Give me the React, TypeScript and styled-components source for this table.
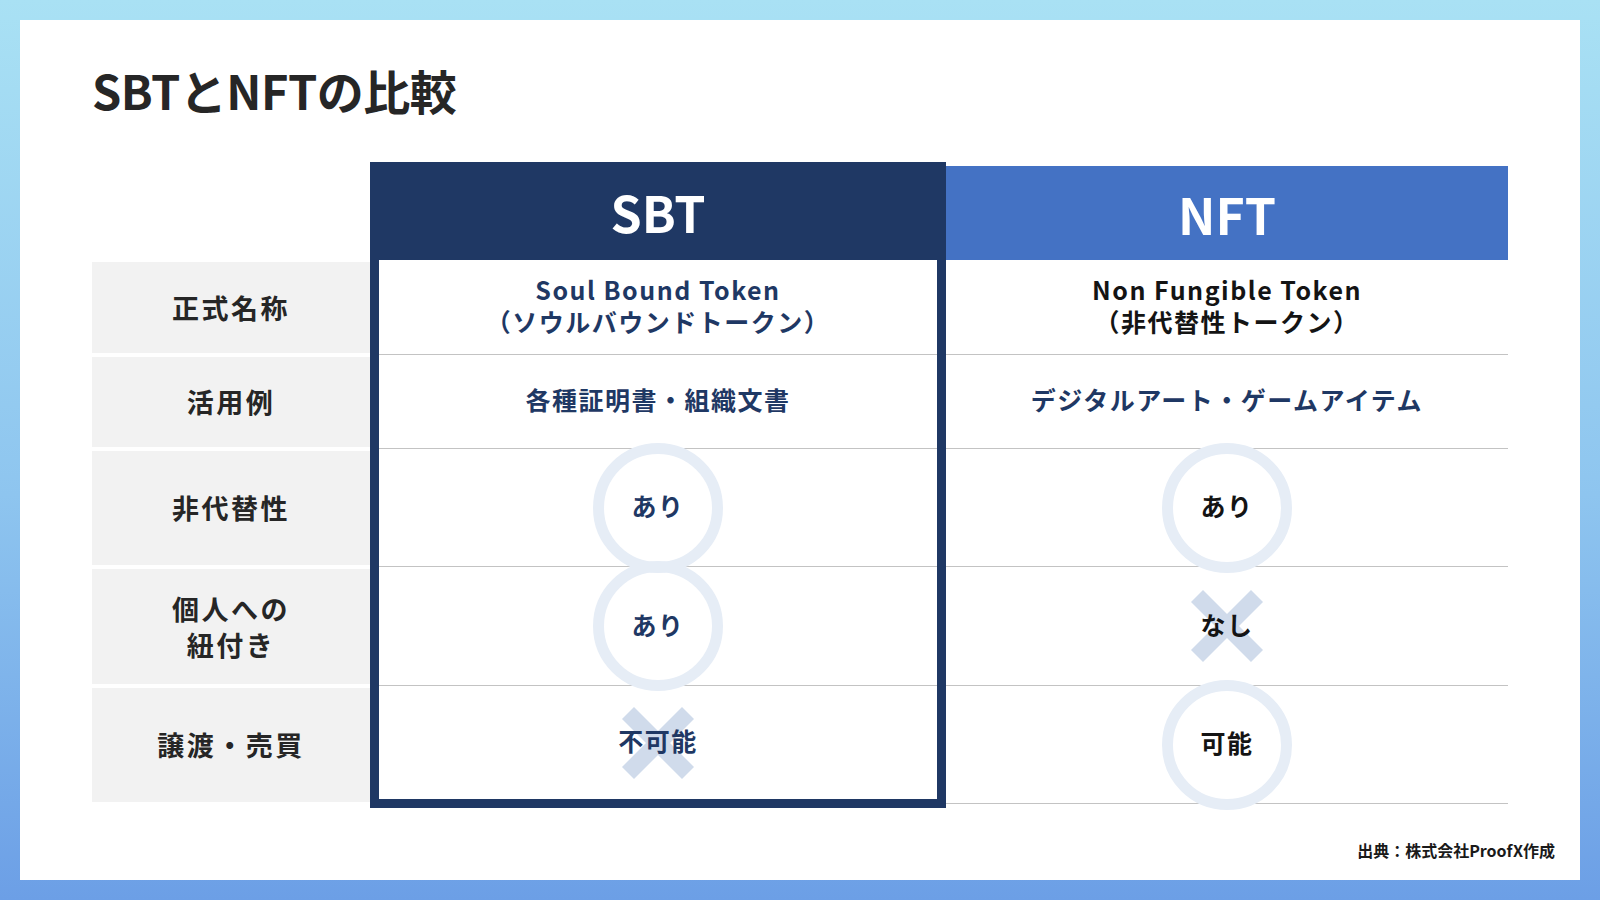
import React from 'react'
import styled, { createGlobalStyle } from 'styled-components'

const GlobalStyle = createGlobalStyle`
    body {
        margin: 0;
        font-family: "Noto Sans CJK JP", "Noto Sans", sans-serif;
    }
`;

const NAVY = '#1f3864';
const INK = '#262626';

const Page = styled.div`
    width: 1600px;
    height: 900px;
    box-sizing: border-box;
    padding: 20px;
    background: linear-gradient(180deg, #a9e1f4 0%, #8ec5ef 55%, #6c9fe6 100%);
`;

const Card = styled.div`
    height: 100%;
    box-sizing: border-box;
    background-color: #fff;
    padding: 46px 25px 20px 72px;
    display: flex;
    flex-direction: column;
`;

const Title = styled.h1`
    margin: 0;
    font-size: 47px;
    line-height: 48px;
    font-weight: 700;
    letter-spacing: -0.5px;
    color: ${INK};
`;

const Table = styled.div`
    margin-top: 48px;
    display: flex;
    align-items: flex-start;
`;

const LabelColumn = styled.div`
    width: 278px;
    padding-top: 98px;
    display: flex;
    flex-direction: column;
`;

const LabelCell = styled.div<{ $h: number }>`
    height: ${p => p.$h}px;
    box-sizing: border-box;
    padding: 2px 0;
    display: flex;
`;

const LabelBox = styled.div`
    flex: 1;
    background-color: #f2f2f2;
    display: flex;
    align-items: center;
    justify-content: center;
    text-align: center;
    font-size: 27px;
    line-height: 36px;
    letter-spacing: 2.5px;
    font-weight: 700;
    color: ${INK};
`;

const SbtColumn = styled.div`
    width: 576px;
    box-sizing: border-box;
    background-color: ${NAVY};
    padding: 0 9px 9px;
`;

const NftColumn = styled.div`
    width: 562px;
    margin-top: 4px;
`;

const ColumnHeader = styled.div<{ $h: number; $bg: string }>`
    height: ${p => p.$h}px;
    background-color: ${p => p.$bg};
    display: flex;
    align-items: center;
    justify-content: center;
    color: #fff;
    font-size: 50px;
    font-weight: 700;
`;

const Body = styled.div`
    background-color: #fff;
`;

const DataCell = styled.div<{ $h: number; $last?: boolean }>`
    position: relative;
    height: ${p => p.$h}px;
    box-sizing: border-box;
    padding-bottom: 5px;
    border-bottom: ${p => (p.$last ? 'none' : '1px solid #c3c3c3')};
    display: flex;
    align-items: center;
    justify-content: center;
`;

const CellText = styled.div<{ $tone: string }>`
    position: relative;
    z-index: 1;
    text-align: center;
    font-size: 25px;
    line-height: 32px;
    letter-spacing: 1.5px;
    font-weight: 700;
    color: ${p => p.$tone};
`;

const Mark = styled.svg`
    position: absolute;
    left: 50%;
    top: 50%;
    transform: translate(-50%, -50%);
    pointer-events: none;
`;

const Footer = styled.div`
    margin-top: auto;
    align-self: flex-end;
    font-size: 16px;
    line-height: 20px;
    font-weight: 700;
    color: #1a1a1a;
`;

type MarkKind = 'circle' | 'cross' | undefined;

interface Cell {
    lines: string[];
    dark?: boolean;
    mark?: MarkKind;
}

interface Row {
    label: string[];
    h: number;
    sbt: Cell;
    nft: Cell;
}

const rows: Row[] = [
    {
        label: ['正式名称'],
        h: 95,
        sbt: { lines: ['Soul Bound Token', '（ソウルバウンドトークン）'] },
        nft: { lines: ['Non Fungible Token', '（非代替性トークン）'], dark: true },
    },
    {
        label: ['活用例'],
        h: 94,
        sbt: { lines: ['各種証明書・組織文書'] },
        nft: { lines: ['デジタルアート・ゲームアイテム'] },
    },
    {
        label: ['非代替性'],
        h: 118,
        sbt: { lines: ['あり'], mark: 'circle' },
        nft: { lines: ['あり'], dark: true, mark: 'circle' },
    },
    {
        label: ['個人への', '紐付き'],
        h: 119,
        sbt: { lines: ['あり'], mark: 'circle' },
        nft: { lines: ['なし'], dark: true, mark: 'cross' },
    },
    {
        label: ['譲渡・売買'],
        h: 118,
        sbt: { lines: ['不可能'], mark: 'cross' },
        nft: { lines: ['可能'], dark: true, mark: 'circle' },
    },
];

const MarkIcon: React.FC<{ kind: MarkKind }> = ({ kind }) => {
    if (kind === 'circle') {
        return (
            <Mark width="132" height="132" viewBox="0 0 132 132">
                <circle cx="66" cy="66" r="59.5" fill="none" stroke="#e6edf6" strokeWidth="11" />
            </Mark>
        );
    }
    if (kind === 'cross') {
        return (
            <Mark width="72" height="72" viewBox="0 0 72 72">
                <g stroke="#d0dbeb" strokeWidth="17">
                    <line x1="6" y1="6" x2="66" y2="66" />
                    <line x1="66" y1="6" x2="6" y2="66" />
                </g>
            </Mark>
        );
    }
    return null;
};

// one text block per cell, lines split by <br />
const Lines: React.FC<{ lines: string[] }> = ({ lines }) => (
    <>
        {lines.map((l, i) => (
            <React.Fragment key={i}>
                {i > 0 && <br />}
                {l}
            </React.Fragment>
        ))}
    </>
);

const App: React.FC = () => {
    return (
        <Page>
            <GlobalStyle />
            <Card>
                <Title>SBTとNFTの比較</Title>
                <Table>
                    <LabelColumn>
                        {rows.map((r, i) => (
                            <LabelCell key={i} $h={r.h}>
                                <LabelBox>
                                    <div>
                                        <Lines lines={r.label} />
                                    </div>
                                </LabelBox>
                            </LabelCell>
                        ))}
                    </LabelColumn>

                    <SbtColumn>
                        <ColumnHeader $h={98} $bg={NAVY}>SBT</ColumnHeader>
                        <Body>
                            {rows.map((r, i) => {
                                const last = i === rows.length - 1;
                                return (
                                    <DataCell key={i} $h={last ? r.h - 5 : r.h} $last={last}>
                                        <MarkIcon kind={r.sbt.mark} />
                                        <CellText $tone={NAVY}>
                                            <Lines lines={r.sbt.lines} />
                                        </CellText>
                                    </DataCell>
                                );
                            })}
                        </Body>
                    </SbtColumn>

                    <NftColumn>
                        <ColumnHeader $h={94} $bg="#4472c4">NFT</ColumnHeader>
                        <Body>
                            {rows.map((r, i) => (
                                <DataCell key={i} $h={r.h}>
                                    <MarkIcon kind={r.nft.mark} />
                                    <CellText $tone={r.nft.dark ? '#141414' : NAVY}>
                                        <Lines lines={r.nft.lines} />
                                    </CellText>
                                </DataCell>
                            ))}
                        </Body>
                    </NftColumn>
                </Table>
                <Footer>出典：株式会社ProofX作成</Footer>
            </Card>
        </Page>
    );
};

export default App
